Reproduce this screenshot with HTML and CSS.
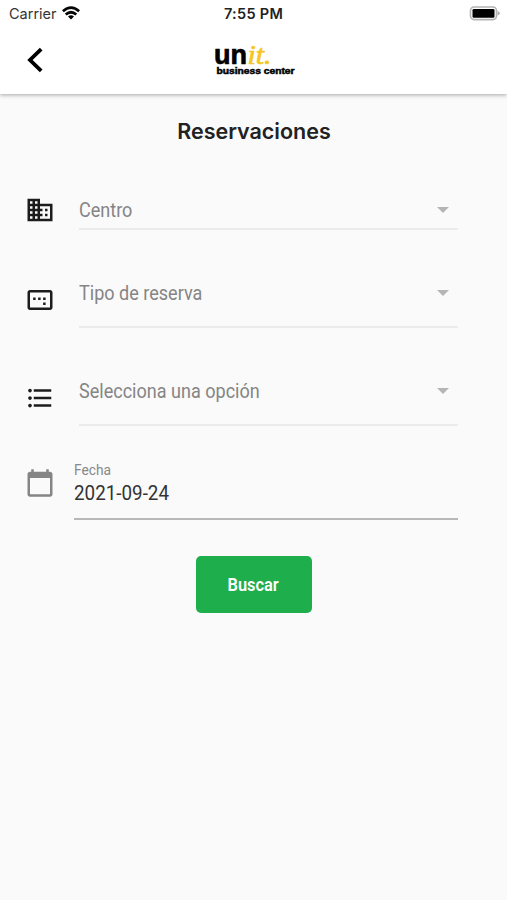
FILE: index.html
```html
<!DOCTYPE html>
<html lang="es">
<head>
<meta charset="utf-8">
<meta name="viewport" content="width=device-width, initial-scale=1">
<title>Reservaciones</title>
<link rel="stylesheet" href="styles.css">
</head>
<body>
<header class="top">
  <div class="status">
    <div class="status-left">
      <span class="carrier">Carrier</span>
      <svg class="wifi" viewBox="0 0 18 14" width="18" height="14" fill="none" stroke="#050505" stroke-width="2.7">
        <path d="M.9 5.2Q9-1.9 17.1 5.2"/>
        <path d="M3.7 8.6Q9 3.900 14.3 8.6"/>
        <path d="M6 10.500Q9 7.900 12 10.500L9 13.600Z" fill="#050505" stroke="none"/>
      </svg>
    </div>
    <span class="clock">7:55 PM</span>
    <svg class="battery" viewBox="0 0 31 15" width="31" height="15">
      <rect x="1.500" y="1" width="26" height="12.6" rx="3.6" fill="#fff" stroke="#b3b3b3" stroke-width="1.6"/>
      <rect x="3.500" y="3" width="22" height="8.8" rx="1.3" fill="#000"/>
      <path d="M28.600 5Q30.8 5.8 30.8 7.3T28.600 9.6Z" fill="#aaa"/>
    </svg>
  </div>
  <nav class="bar">
    <svg class="back" viewBox="0 0 18 26" width="18" height="26" fill="none" stroke="#000" stroke-width="3.8"><path d="M15.2 2.2L4 13L15.2 23.8"/></svg>
    <svg class="logo" viewBox="0 0 82 34" width="82" height="34">
      <text class="logo-un" x="1" y="21.5" textLength="33" lengthAdjust="spacingAndGlyphs">un</text>
      <text class="logo-it" x="34.5" y="21.5" textLength="24" lengthAdjust="spacingAndGlyphs">it.</text>
      <text class="logo-sub" x="3.5" y="31.7" textLength="78" lengthAdjust="spacingAndGlyphs">business center</text>
    </svg>
  </nav>
</header>
<main class="form">
  <h1 class="title">Reservaciones</h1>
  <div class="row row-center">
    <svg class="icon" viewBox="0 0 24 24" fill="#1c1c1c"><path d="M12 7V3H2v18h20V7H12zM6 19H4v-2h2v2zm0-4H4v-2h2v2zm0-4H4V9h2v2zm0-4H4V5h2v2zm4 12H8v-2h2v2zm0-4H8v-2h2v2zm0-4H8V9h2v2zm0-4H8V5h2v2zm10 12h-8v-2h2v-2h-2v-2h2v-2h-2V9h8v10zm-2-8h-2v2h2v-2zm0 4h-2v2h2v-2z"/></svg>
    <div class="select"><span class="label">Centro</span><i class="arrow"></i></div>
  </div>
  <div class="row row-type">
    <svg class="icon" viewBox="0 0 24 24" fill="#1c1c1c"><path d="M6.500 10h2v2h-2zm4 0h2v2h-2zm4 0h2v2h-2zm0 4h2v2h-2zM20 4H4c-1.100 0-2 .9-2 2v12c0 1.100.9 2 2 2h16c1.100 0 2-.9 2-2V6c0-1.100-.9-2-2-2zm0 14H4V6h16v12z"/></svg>
    <div class="select"><span class="label">Tipo de reserva</span><i class="arrow"></i></div>
  </div>
  <div class="row row-option">
    <svg class="icon" viewBox="0 0 24 24" fill="#1c1c1c"><path d="M4 10.500c-.83 0-1.500.67-1.500 1.500s.67 1.500 1.500 1.500 1.500-.67 1.500-1.500-.67-1.500-1.500-1.500zm0-6c-.83 0-1.500.67-1.500 1.500S3.170 7.500 4 7.500 5.500 6.830 5.500 6 4.830 4.500 4 4.500zm0 12c-.83 0-1.500.68-1.500 1.500s.68 1.500 1.500 1.500 1.500-.68 1.500-1.500-.67-1.500-1.500-1.500zM7 19h14v-2H7v2zm0-6h14v-2H7v2zm0-8v2h14V5H7z"/></svg>
    <div class="select"><span class="label">Selecciona una opción</span><i class="arrow"></i></div>
  </div>
  <div class="row row-date">
    <svg class="icon icon-date" viewBox="0 0 24 24" fill="#858585"><path d="M20 3h-1V1h-2v2H7V1H5v2H4c-1.100 0-2 .9-2 2v16c0 1.100.9 2 2 2h16c1.100 0 2-.9 2-2V5c0-1.100-.9-2-2-2zm0 18H4V8h16v13z"/></svg>
    <div class="date"><span class="date-label">Fecha</span><span class="date-value">2021-09-24</span></div>
  </div>
  <button class="submit" type="button"><span class="submit-text">Buscar</span></button>
</main>
</body>
</html>
```
FILE: styles.css
```css
* { box-sizing: border-box; }
body { margin: 0; min-height: 900px; background: #fafafa; font-family: Roboto, sans-serif; color: #222; }
.top { height: 94px; background: #fff; box-shadow: 0 1px 4px rgba(0,0,0,.34); }
.status { height: 28px; display: grid; grid-template-columns: 1fr auto 1fr; align-items: center; padding: 0 7px 0 9px; font-family: Inter, sans-serif; }
.status-left { display: flex; align-items: center; gap: 5px; }
.carrier { font-size: 14.500px; line-height: 28px; color: #333; }
.wifi { margin-top: -2px; }
.clock { font-size: 14.500px; font-weight: 600; line-height: 28px; letter-spacing: .3px; margin-left: -2px; color: #222; }
.battery { justify-self: end; margin-top: -1px; }
.bar { height: 66px; display: grid; grid-template-columns: 1fr 82px 1fr; padding: 0 26px; }
.back { margin-top: 19px; }
.logo { margin-top: 14px; overflow: visible; }
.logo-un { font: 700 28px "Liberation Sans", sans-serif; fill: #000; stroke: #000; stroke-width: .7px; }
.logo-it { font: italic 400 28px "Liberation Serif", serif; fill: #f5c622; stroke: #f5c622; stroke-width: .7px; }
.logo-sub { font: 700 8.800px "Liberation Sans", sans-serif; fill: #000; stroke: #000; stroke-width: .5px; }
.form { display: flex; flex-direction: column; }
.title { margin: 21px 0 0; padding-left: 1px; text-align: center; font: 600 21.500px/32px Inter, sans-serif; color: #222; }
.row { display: flex; padding: 0 49px 0 25px; }
.icon { flex: none; width: 30px; height: 30px; }
.select { flex: 1; margin-left: 24px; display: flex; justify-content: space-between; align-items: flex-start; padding-right: 9px; border-bottom: 2px solid #ebebeb; }
.label { font-size: 19.500px; line-height: 25px; color: #858585; transform: scaleX(.925); transform-origin: left; white-space: nowrap; }
.arrow { margin-top: 9px; border: 6px solid transparent; border-top-color: #b5b5b5; border-bottom: 0; }
.row-center { margin-top: 48px; }
.row-center .select { height: 32px; margin-top: 3px; }
.row-type { margin-top: 51px; }
.row-type .icon { margin-top: 4px; }
.row-type .select { height: 47px; }
.row-option { margin-top: 51px; }
.row-option .icon { margin-top: 4px; }
.row-option .select { height: 47px; }
.row-date { margin-top: 35px; }
.icon-date { margin-top: 7px; }
.date { flex: 1; height: 59px; margin-left: 19px; display: flex; flex-direction: column; align-items: flex-start; border-bottom: 2px solid #b8b8b8; }
.date-label { font-size: 14.500px; line-height: 20px; color: #888; transform: scaleX(.95); transform-origin: left; }
.date-value { font-size: 19.500px; line-height: 25px; color: #333; transform: scaleX(.965); transform-origin: left; }
.submit { align-self: center; width: 116px; height: 57px; margin: 36px 0 0; padding: 0; border: 0; border-radius: 5px; background: #1fae4c; color: #fff; font: 600 18px Roboto, sans-serif; }
.submit-text { display: inline-block; transform: scaleX(.91); }
```
